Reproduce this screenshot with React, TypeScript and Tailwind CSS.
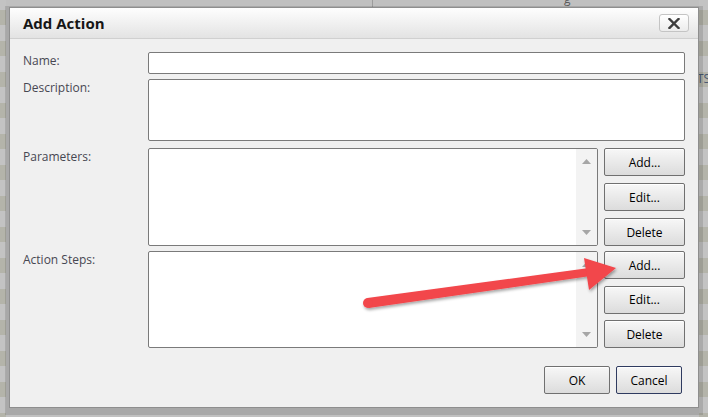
import React from "react";

function ScrollArrow({ down }: { down?: boolean }) {
  return (
    <svg width="9" height="5" viewBox="0 0 9 5" className="block">
      {down ? (
        <polygon points="0,0 9,0 4.5,5" fill="#a6a6a6" />
      ) : (
        <polygon points="0,5 9,5 4.5,0" fill="#a6a6a6" />
      )}
    </svg>
  );
}

function ListBox({ h }: { h: string }) {
  return (
    <div className={`flex-1 flex border border-[#7a7a7a] rounded-[2px] bg-white overflow-hidden ${h}`}>
      <div className="flex-1" />
      <div className="w-[21px] bg-[#f3f3f3] flex flex-col items-center justify-between pt-[10px] pb-[10px]">
        <ScrollArrow />
        <ScrollArrow down />
      </div>
    </div>
  );
}

function Btn({ label, w = "w-[81px]", strong }: { label: string; w?: string; strong?: boolean }) {
  return (
    <div
      className={`${w} h-[28px] flex items-center justify-center rounded-[2px] border ${
        strong ? "border-[#2f3b60]" : "border-[#707070]"
      } bg-linear-to-b from-[#f7f7f7] to-[#dcdcdc] shadow-[inset_0_1px_0_#ffffff] text-[12px] text-black leading-none pt-[1px]`}
    >
      {label}
    </div>
  );
}

function Label({ text }: { text: string }) {
  return <div className="w-[125px] shrink-0 text-[12px] leading-[16px] pt-[1px] text-[#474752]">{text}</div>;
}

export default function App() {
  return (
    <div className="relative w-[708px] h-[417px] overflow-hidden bg-[#c0c0c0] font-['Open_Sans','Noto_Sans',sans-serif]">
      {/* background page fragments */}
      <div className="absolute left-0 top-0 w-[6px] h-full bg-[repeating-linear-gradient(180deg,#c3c3c3_0px,#c3c3c3_10px,#b4b4aa_10px,#b4b4aa_25px,#c3c3c3_25px,#c3c3c3_31px)]" />
      <div className="absolute right-0 top-0 w-[9px] h-full bg-[repeating-linear-gradient(180deg,#c3c3c3_0px,#c3c3c3_10px,#b4b4aa_10px,#b4b4aa_25px,#c3c3c3_25px,#c3c3c3_31px)]" />
      <div className="absolute left-[372px] top-0 w-px h-[7px] bg-[#9c9c9c]" />
      <div className="absolute left-[564px] top-[-10px] text-[12px] text-[#5a5a5a]">g</div>
      <div className="absolute left-[697px] top-[70px] text-[12px] text-[#4b5a72]">TS</div>

      <div className="relative pl-[9px] pt-[7px]">
        <div className="w-[690px] h-[401px] flex flex-col bg-[#f0f0f0] border border-[#8e8e8e] shadow-[0_3px_0_4px_rgba(0,0,0,0.12)]">
          {/* title bar */}
          <div className="h-[31px] shrink-0 flex items-center justify-between pl-[13px] pr-[9px] border-b border-[#d0d0d0] bg-linear-to-b from-[#fefefe] to-[#e3e3e3]">
            <div className="text-[15px] font-bold text-[#161616] leading-none">Add Action</div>
            <div className="w-[30px] h-[18px] flex items-center justify-center rounded-[3px] border border-[#c4c4c4] bg-linear-to-b from-[#ffffff] to-[#ececec]">
              <svg width="12" height="11" viewBox="0 0 12 11">
                <path d="M1.5 1 L10.5 10 M10.5 1 L1.5 10" stroke="#3e3e3e" strokeWidth="2.4" strokeLinecap="square" />
              </svg>
            </div>
          </div>

          {/* body */}
          <div className="flex-1 flex flex-col pl-[13px] pr-[13px] pt-[13px]">
            <div className="flex">
              <Label text="Name:" />
              <div className="flex-1 h-[22px] border border-[#7a7a7a] rounded-[2px] bg-white" />
            </div>
            <div className="flex mt-[5px]">
              <Label text="Description:" />
              <div className="flex-1 h-[62px] border border-[#7a7a7a] rounded-[2px] bg-white" />
            </div>
            <div className="flex mt-[7px]">
              <Label text="Parameters:" />
              <div className="flex-1 flex gap-[6px]">
                <ListBox h="h-[98px]" />
                <div className="flex flex-col justify-between h-[98px]">
                  <Btn label="Add..." />
                  <Btn label="Edit..." />
                  <Btn label="Delete" />
                </div>
              </div>
            </div>
            <div className="flex mt-[5px]">
              <Label text="Action Steps:" />
              <div className="flex-1 flex gap-[6px]">
                <ListBox h="h-[97px]" />
                <div className="flex flex-col justify-between h-[97px]">
                  <Btn label="Add..." />
                  <Btn label="Edit..." />
                  <Btn label="Delete" />
                </div>
              </div>
            </div>
            <div className="flex justify-end gap-[6px] mt-[18px] pr-[3px]">
              <Btn label="OK" w="w-[66px]" />
              <Btn label="Cancel" w="w-[66px]" strong />
            </div>
          </div>
        </div>
      </div>

      {/* annotation arrow */}
      <svg className="absolute left-0 top-0 pointer-events-none" width="708" height="417" viewBox="0 0 708 417">
        <defs>
          <filter id="sh" x="-10%" y="-30%" width="120%" height="160%">
            <feDropShadow dx="1" dy="2" stdDeviation="1.6" floodColor="#000" floodOpacity="0.35" />
          </filter>
        </defs>
        <g filter="url(#sh)" fill="#f2464b">
          <polygon points="367.3,298 596.4,267 597.6,275 368.7,308" />
          <circle cx="368" cy="303" r="5" />
          <polygon points="584,258 616,268 589,290" />
        </g>
      </svg>
    </div>
  );
}
